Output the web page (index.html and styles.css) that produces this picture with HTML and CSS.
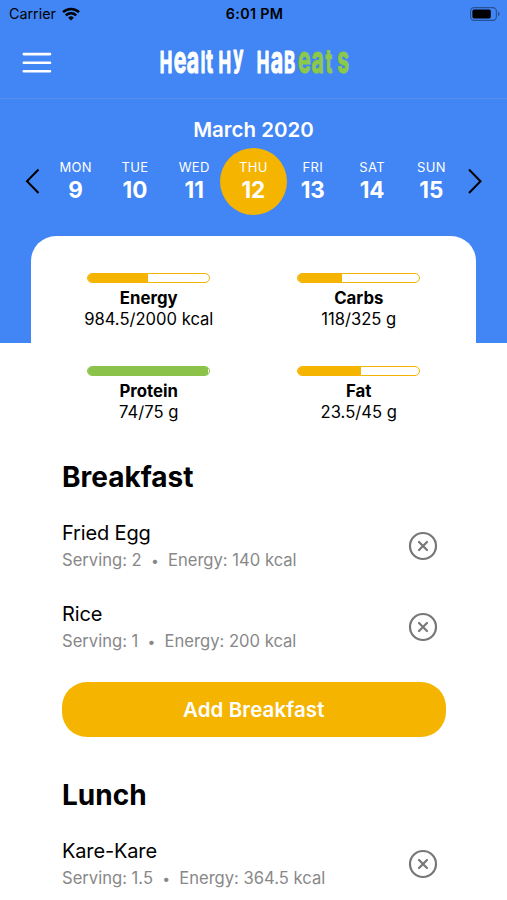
FILE: index.html
```
<!DOCTYPE html>
<html lang="en">
<head>
  <meta charset="UTF-8">
  <meta name="viewport" content="width=device-width, initial-scale=1.0">
  <title>Healthy Habeats</title>
  <link rel="stylesheet" href="styles.css">
</head>
<body>

  <div class="top">
    <div class="status">
      <div class="carrier">
        <span>Carrier</span>
        <svg width="18" height="14" viewBox="0 0 18 14" fill="none" stroke="#000" stroke-width="2.5">
          <path d="M1 5.2a11.4 11.4 0 0 1 16 0"/>
          <path d="M3.8 8.3a7.4 7.4 0 0 1 10.4 0"/>
          <path d="M9 13.6l-2.8-2.9a4 4 0 0 1 5.6 0z" fill="#000" stroke="none"/>
        </svg>
      </div>
      <span class="time">6:01 PM</span>
      <svg class="battery" width="30" height="14" viewBox="0 0 30 14">
        <rect x=".6" y=".6" width="25.8" height="12.8" rx="3.6" fill="none" stroke="#285092" stroke-width="1.1"/>
        <rect x="2.4" y="2.4" width="18.4" height="9.2" rx="1.8"/>
        <path d="M28 4.8v4.4q1.6-.6 1.6-2.2t-1.6-2.2z" fill="#285092"/>
      </svg>
    </div>

    <div class="header">
      <svg class="menu" width="30" height="22" viewBox="0 0 30 22" stroke="#fff" stroke-width="2.6" stroke-linecap="round">
        <path d="M1.8 2.1h26.2M1.8 10.7h26.2M1.8 19.3h26.2"/>
      </svg>
      <svg class="logo" width="202" height="60" viewBox="0 0 202 60">
        <g transform="translate(4 0) scale(.56 1)">
          <text y="40"><tspan x="5">H</tspan><tspan class="low" x="30">e</tspan><tspan class="low" x="53">a</tspan><tspan x="78">l</tspan><tspan class="t" x="88">t</tspan><tspan x="110">H</tspan><tspan class="y" x="136" dy="-6">y</tspan></text>
          <text y="40"><tspan x="178">H</tspan><tspan class="low" x="203">a</tspan><tspan x="227">B</tspan></text>
          <text y="40" class="eats"><tspan class="low" x="252">e</tspan><tspan class="low" x="276">a</tspan><tspan class="t" x="301">t</tspan><tspan class="low" x="322">s</tspan></text>
        </g>
      </svg>
    </div>

    <div class="calendar">
      <h2>March 2020</h2>
      <div class="week">
        <svg class="arrow" width="16" height="28" viewBox="0 0 16 28"><path d="M14.5 2.5L3 14.2 14.5 26"/></svg>
        <div class="days">
          <div class="day"><span>MON</span><b>9</b></div>
          <div class="day"><span>TUE</span><b>10</b></div>
          <div class="day"><span>WED</span><b>11</b></div>
          <div class="day active"><span>THU</span><b>12</b></div>
          <div class="day"><span>FRI</span><b>13</b></div>
          <div class="day"><span>SAT</span><b>14</b></div>
          <div class="day"><span>SUN</span><b>15</b></div>
        </div>
        <svg class="arrow" width="16" height="28" viewBox="0 0 16 28"><path d="M2 2.5L13.5 14.2 2 26"/></svg>
      </div>
    </div>
  </div>

  <div class="card">
    <div class="nutrients">
      <div class="nutrient">
        <div class="bar"><div class="fill" style="width: 49.2%"></div></div>
        <h3>Energy</h3>
        <p>984.5/2000 kcal</p>
      </div>
      <div class="nutrient">
        <div class="bar"><div class="fill" style="width: 36.3%"></div></div>
        <h3>Carbs</h3>
        <p>118/325 g</p>
      </div>
      <div class="nutrient">
        <div class="bar green"><div class="fill" style="width: 98.7%"></div></div>
        <h3>Protein</h3>
        <p>74/75 g</p>
      </div>
      <div class="nutrient">
        <div class="bar"><div class="fill" style="width: 52.2%"></div></div>
        <h3>Fat</h3>
        <p>23.5/45 g</p>
      </div>
    </div>

    <div class="meal">
      <h1>Breakfast</h1>
      <div class="food">
        <div>
          <h4>Fried Egg</h4>
          <p>Serving: 2 <i>•</i> Energy: 140 kcal</p>
        </div>
        <svg class="remove" width="30" height="30" viewBox="0 0 30 30"><circle cx="15" cy="15" r="13"/><path d="M11 11l8 8M19 11l-8 8"/></svg>
      </div>
      <div class="food">
        <div>
          <h4>Rice</h4>
          <p>Serving: 1 <i>•</i> Energy: 200 kcal</p>
        </div>
        <svg class="remove" width="30" height="30" viewBox="0 0 30 30"><circle cx="15" cy="15" r="13"/><path d="M11 11l8 8M19 11l-8 8"/></svg>
      </div>
      <button class="add">Add Breakfast</button>
    </div>

    <div class="meal">
      <h1>Lunch</h1>
      <div class="food">
        <div>
          <h4>Kare-Kare</h4>
          <p>Serving: 1.5 <i>•</i> Energy: 364.5 kcal</p>
        </div>
        <svg class="remove" width="30" height="30" viewBox="0 0 30 30"><circle cx="15" cy="15" r="13"/><path d="M11 11l8 8M19 11l-8 8"/></svg>
      </div>
    </div>
  </div>

</body>
</html>
```
FILE: styles.css
```
* {
  box-sizing: border-box;
}
body {
  margin: 0;
  height: 900px;
  overflow: hidden;
  background: #fff;
  color: #000;
  font-family: Inter, "Liberation Sans", sans-serif;
}
h1, h2, h3, h4, p {
  margin: 0;
}
svg {
  display: block;
}

/* blue area */
.top {
  height: 343px;
  background: #4285f4;
}
.status {
  display: grid;
  grid-template-columns: 1fr auto 1fr;
  align-items: center;
  height: 27px;
  padding: 0 7px 0 9px;
  font-size: 14.3px;
}
.carrier {
  display: flex;
  align-items: center;
  gap: 6px;
}
.time {
  font-weight: 600;
  letter-spacing: .3px;
}
.battery {
  justify-self: end;
}
.header {
  display: grid;
  grid-template-columns: 1fr auto 1fr;
  align-items: center;
  height: 72px;
  padding: 0 22px;
  border-bottom: 1px solid #5a8fe8;
}
.logo text {
  font-family: Inter, sans-serif;
  font-size: 30px;
  font-weight: 700;
  fill: #fff;
  stroke: #fff;
  stroke-width: 1.2;
  stroke-linejoin: round;
}
.logo .low {
  font-size: 38px;
}
.logo .t {
  font-size: 33px;
}
.logo .y {
  font-size: 30px;
}
.logo .eats {
  fill: #8bc84b;
  stroke: #8bc84b;
}

.calendar {
  color: #fff;
  text-align: center;
}
.calendar h2 {
  padding-top: 18px;
  font-size: 20.5px;
  font-weight: 600;
  line-height: 26px;
}
.week {
  display: flex;
  align-items: center;
  justify-content: space-between;
  height: 68px;
  margin-top: 4px;
  padding: 0 24px;
}
.arrow {
  fill: none;
  stroke: #000;
  stroke-width: 2;
}
.days {
  display: grid;
  grid-template-columns: repeat(7, 59.3px);
  justify-content: center;
}
.day {
  display: flex;
  flex-direction: column;
  align-items: center;
  justify-content: center;
  height: 67px;
}
.day span {
  font-size: 13px;
  letter-spacing: .3px;
  line-height: 17px;
}
.day b {
  font-size: 22.5px;
  font-weight: 700;
  line-height: 27px;
}
.active {
  width: 67px;
  margin-left: -4px;
  border-radius: 50%;
  background: #f4b400;
}

/* white sheet */
.card {
  margin: -107px 31px 0;
  padding: 37px 30.5px 0 31px;
  border-radius: 25px 25px 0 0;
  background: #fff;
}
.nutrients {
  display: grid;
  grid-template-columns: 210px 210px;
  justify-content: center;
  row-gap: 35px;
}
.nutrient {
  display: flex;
  flex-direction: column;
  align-items: center;
  height: 58px;
}
.bar {
  width: 123px;
  height: 10px;
  border: 1px solid #f4b400;
  border-radius: 5px;
  overflow: hidden;
}
.fill {
  height: 100%;
  background: #f4b400;
}
.green {
  border-color: #8bc34a;
}
.green .fill {
  background: #8bc34a;
}
.nutrient h3 {
  margin-top: 5px;
  font-size: 16.8px;
  font-weight: 650;
  line-height: 21px;
}
.nutrient p {
  font-size: 16.6px;
  line-height: 21px;
}

.meal {
  margin-bottom: 40px;
}
.nutrients + .meal {
  margin-top: 35px;
}
.meal h1 {
  font-size: 28px;
  font-weight: 700;
  line-height: 36px;
  margin-bottom: 26px;
}
.food {
  display: flex;
  align-items: center;
  justify-content: space-between;
  height: 51px;
  margin-bottom: 30px;
  padding-right: 8px;
}
.food h4 {
  font-size: 20px;
  font-weight: 400;
  letter-spacing: -.15px;
  line-height: 27px;
}
.food p {
  color: #888;
  font-size: 16.6px;
  line-height: 27px;
}
.food i {
  margin: 0 4.5px;
  font-size: 14px;
  font-style: normal;
}
.remove {
  margin-top: -1px;
  fill: none;
  stroke: #777;
  stroke-width: 2.2;
  stroke-linecap: round;
}
.add {
  display: block;
  width: 100%;
  height: 55px;
  margin-top: -1px;
  border: none;
  border-radius: 25px;
  background: #f4b400;
  color: #fff;
  font-family: inherit;
  font-size: 20.5px;
  font-weight: 600;
  letter-spacing: .1px;
}
```
